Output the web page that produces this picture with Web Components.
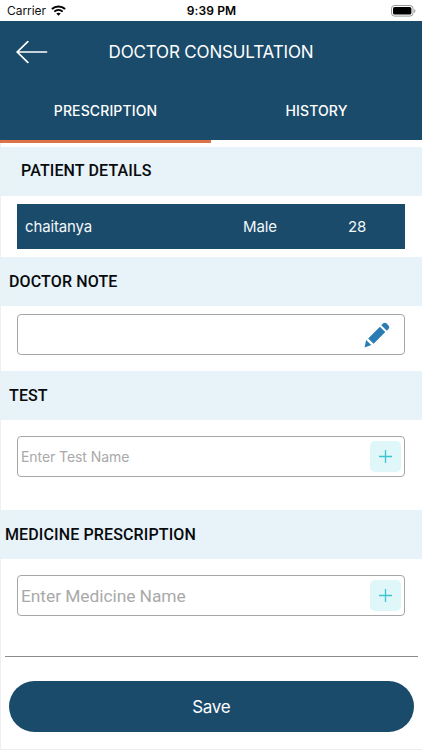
<!DOCTYPE html>
<html lang="en">
<head>
<meta charset="utf-8">
<title>Doctor Consultation</title>
<style>
html, body { margin: 0; width: 422px; height: 750px; overflow: hidden; background: #fff; }
body { font-family: Inter, "Liberation Sans", sans-serif; }
</style>
</head>
<body>
<consultation-screen></consultation-screen>
<script>
const define = (name, html) => customElements.define(name, class extends HTMLElement {
  constructor() {
    super();
    this.attachShadow({ mode: 'open' }).innerHTML = html;
  }
});

define('status-bar', `
<style>
:host { display: grid; grid-template-columns: 1fr auto 1fr; align-items: center; height: 21px; box-sizing: border-box; padding: 0 6px 0 7px; background: #fff; color: #111; font-size: 12px; }
.left { display: flex; align-items: center; gap: 5px; letter-spacing: -.05px; }
.time { font-weight: 600; font-size: 12px; color: #000; letter-spacing: .1px; }
.battery { justify-self: end; }
svg { display: block; }
</style>
<div class="left"><span>Carrier</span>
<svg width="15" height="11" viewBox="0 0 15 11" fill="none" stroke="#000"><path d="M.9 4.1C4.6.7 10.4.7 14.1 4.1" stroke-width="2.1"/><path d="M3.3 6.6c2.4-2.1 6-2.1 8.4 0" stroke-width="1.9"/><path d="M5.3 8.5c1.3-1 3.1-1 4.4 0L7.5 10.8z" fill="#000" stroke="none"/></svg></div>
<span class="time">9:39 PM</span>
<svg class="battery" width="25" height="12" viewBox="0 0 25 12"><rect x=".5" y=".5" width="21.5" height="10.6" rx="3" fill="#fff" stroke="#999"/><rect x="2" y="2" width="18.4" height="7.6" rx="1.7"/><path d="M23.2 4v4c1.6-.7 1.6-3.3 0-4z" fill="#999"/></svg>`);

define('title-bar', `
<style>
:host { display: grid; grid-template-columns: 64px 1fr 64px; align-items: center; height: 61px; color: #fff; font-size: 17px; }
svg { display: block; margin-left: 16px; }
.title { text-align: center; white-space: nowrap; letter-spacing: -.15px; }
</style>
<svg width="32" height="24" viewBox="0 0 32 24" fill="none" stroke="#fff" stroke-width="1.7" stroke-linecap="round"><path d="M1.2 12H30.5M11.8 1.7 1.2 12 11.8 22.4"/></svg>
<span class="title"><slot></slot></span>`);

define('tab-item', `
<style>
:host { display: flex; flex: 1; align-items: center; justify-content: center; height: 61px; box-sizing: border-box; padding-bottom: 1px; border-bottom: 3px solid #fff; color: #fff; font-size: 14px; font-weight: 500; letter-spacing: .12px; background: #1b4b6a; }
:host([active]) { border-color: #dc7245; }
</style><span><slot></slot></span>`);

define('tab-strip', `<style>:host { display: flex; }</style><slot></slot>`);

define('section-heading', `
<style>
:host { display: flex; align-items: center; height: 49px; box-sizing: border-box; padding-left: var(--inset, 8px); padding-bottom: var(--lift, 0); background: #e7f2f9; color: #080a0c; font: 500 16px Roboto, sans-serif; letter-spacing: .13px; }
</style><slot></slot>`);

define('patient-row', `
<style>
:host { display: grid; grid-template-columns: 218px 105px auto; align-items: center; margin: 8px 16.6px 8px 16px; height: 45px; box-sizing: border-box; padding-left: 8px; background: #1b4b6a; color: #f2f7fa; font-size: 15px; letter-spacing: -.15px; }
</style>
<slot name="name"></slot><slot name="sex"></slot><slot name="age"></slot>`);

define('entry-field', `
<style>
:host { display: flex; align-items: center; justify-content: space-between; margin: 0 16.6px 0 16px; height: 41px; box-sizing: border-box; padding: 0 3px; border: 1px solid #a6a6a6; border-radius: 4px; color: #a9a9a9; background: #fff; font-size: 14px; letter-spacing: -.07px; }
</style>
<span><slot></slot></span><slot name="action"></slot>`);

define('add-button', `
<style>
:host { display: flex; align-items: center; justify-content: center; width: 31px; height: 31px; border-radius: 5px; background: #e0f7fa; }
</style>
<svg width="15" height="15" viewBox="0 0 15 15" fill="none" stroke="#3dc4d0" stroke-width="1.3"><path d="M7.5 1v13M1 7.5h13"/></svg>`);

define('edit-icon', `
<style>:host { display: block; margin-right: 11.4px; } svg { display: block; }</style>
<svg width="26" height="26" viewBox="0 0 26 26" fill="#2b7cb5"><path d="m17.3 3.2 1.9-1.9q1.6-1.3 3.1 0l2.4 2.4q1.3 1.5 0 3.1l-1.9 1.9zM15.9 4.7l5.4 5.4L9.6 21.8l-5.4-5.4zM2.1 18l5.2 5.1L.6 25.5z"/></svg>`);

define('save-button', `
<style>
:host { display: flex; align-items: center; justify-content: center; height: 51px; margin: 0 8.5px 0 8px; border-radius: 26px; background: #1b4b6a; color: #fff; font-size: 17px; letter-spacing: -.3px; }
</style><slot></slot>`);

define('consultation-screen', `
<style>
:host { display: flex; flex-direction: column; width: 422px; height: 750px; background: #fff; }
header { background: #1b4b6a; height: 122px; flex: none; }
main { display: flex; flex-direction: column; flex: 1; box-sizing: border-box; padding-top: 4px; border-left: 1px solid #ecf0f2; border-bottom: 1px solid #ececec; }
.note { margin-top: 8px; margin-bottom: 16px; }
.test { margin-top: 16px; margin-bottom: 33px; }
.medicine { margin-top: 16px; font-family: Roboto, sans-serif; font-size: 17.4px; letter-spacing: -.06px; }
hr { width: 413px; height: 1px; margin: 40px 0 24px 4px; border: 0; background: #8b8b8b; }
</style>
<status-bar></status-bar>
<header>
  <title-bar>DOCTOR CONSULTATION</title-bar>
  <tab-strip><tab-item active>PRESCRIPTION</tab-item><tab-item>HISTORY</tab-item></tab-strip>
</header>
<main>
  <section-heading style="--inset:20px;--lift:2px">PATIENT DETAILS</section-heading>
  <patient-row><span slot="name">chaitanya</span><span slot="sex">Male</span><span slot="age">28</span></patient-row>
  <section-heading>DOCTOR NOTE</section-heading>
  <entry-field class="note"><edit-icon slot="action"></edit-icon></entry-field>
  <section-heading>TEST</section-heading>
  <entry-field class="test">Enter Test Name<add-button slot="action"></add-button></entry-field>
  <section-heading style="--inset:4px">MEDICINE PRESCRIPTION</section-heading>
  <entry-field class="medicine">Enter Medicine Name<add-button slot="action"></add-button></entry-field>
  <hr>
  <save-button>Save</save-button>
</main>`);
</script>
</body>
</html>
